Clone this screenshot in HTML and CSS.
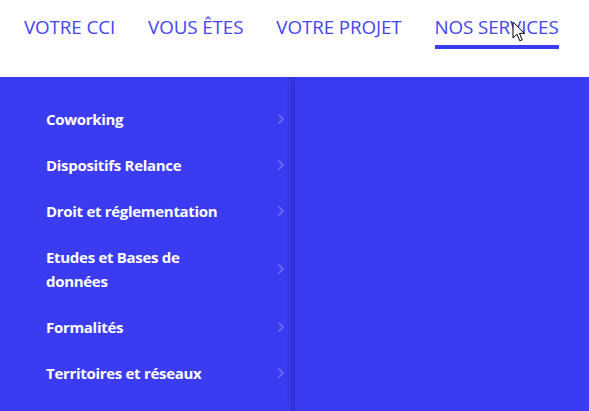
FILE: index.html
```html
<!DOCTYPE html>
<html lang="fr">
<head>
<meta charset="utf-8">
<title>Nos services</title>
<link rel="stylesheet" href="styles.css">
</head>
<body>
<header class="topbar">
  <nav class="mainnav">
    <a class="navlink">VOTRE CCI</a>
    <a class="navlink">VOUS ÊTES</a>
    <a class="navlink">VOTRE PROJET</a>
    <a class="navlink active">NOS SERVICES</a>
  </nav>
</header>
<section class="mega">
  <ul class="submenu">
    <li class="subitem"><span class="label">Coworking</span><svg class="chev" viewBox="0 0 8 12" width="8" height="12"><path d="M1.5 1.5 L6 6 L1.5 10.5" /></svg></li>
    <li class="subitem"><span class="label">Dispositifs Relance</span><svg class="chev" viewBox="0 0 8 12" width="8" height="12"><path d="M1.5 1.5 L6 6 L1.5 10.5" /></svg></li>
    <li class="subitem"><span class="label">Droit et réglementation</span><svg class="chev" viewBox="0 0 8 12" width="8" height="12"><path d="M1.5 1.5 L6 6 L1.5 10.5" /></svg></li>
    <li class="subitem"><span class="label">Etudes et Bases de données</span><svg class="chev" viewBox="0 0 8 12" width="8" height="12"><path d="M1.5 1.5 L6 6 L1.5 10.5" /></svg></li>
    <li class="subitem"><span class="label">Formalités</span><svg class="chev" viewBox="0 0 8 12" width="8" height="12"><path d="M1.5 1.5 L6 6 L1.5 10.5" /></svg></li>
    <li class="subitem"><span class="label">Territoires et réseaux</span><svg class="chev" viewBox="0 0 8 12" width="8" height="12"><path d="M1.5 1.5 L6 6 L1.5 10.5" /></svg></li>
  </ul>
  <div class="subpanel"></div>
</section>
<svg class="cursor" width="14" height="22" viewBox="0 0 14 22"><path d="M1 1 L1 17 L5 13.2 L7.8 19.8 L10.2 18.8 L7.5 12.3 L12.5 12.3 Z" fill="#fff" stroke="#000" stroke-width="1" stroke-linejoin="round"/></svg>
</body>
</html>
```

FILE: styles.css
```css
* { box-sizing: border-box; }
html, body { margin: 0; padding: 0; }
body {
  width: 589px;
  height: 411px;
  overflow: hidden;
  background: #3b3bf2;
  font-family: "Open Sans", "Noto Sans", sans-serif;
  position: relative;
}
.topbar {
  background: #fff;
  height: 77px;
  padding: 13px 0 0 24px;
}
.mainnav {
  display: flex;
  gap: 33px;
}
.navlink {
  font-size: 18.8px;
  line-height: 28px;
  color: #4545ef;
  text-decoration: none;
  padding-bottom: 4px;
  border-bottom: 4px solid transparent;
  letter-spacing: -0.1px;
}
.navlink.active {
  border-bottom-color: #3b3bf2;
}
.mega {
  display: flex;
  height: 334px;
}
.submenu {
  list-style: none;
  margin: 0;
  padding: 19px 0 0 46px;
  width: 295px;
  box-shadow: inset -7px 0 6px -4px rgba(20, 20, 120, 0.35);
}
.subitem {
  display: flex;
  align-items: center;
  padding: 11px 0;
}
.label {
  flex: 1;
  max-width: 188px;
  margin-right: auto;
  font-size: 15px;
  line-height: 24px;
  font-weight: 700;
  color: #fff;
  letter-spacing: -0.3px;
}
.chev {
  margin-right: 10px;
  fill: none;
  stroke: #7070f6;
  stroke-width: 1.6;
}
.subpanel { flex: 1; }
.cursor {
  position: absolute;
  left: 512px;
  top: 21px;
}
```
